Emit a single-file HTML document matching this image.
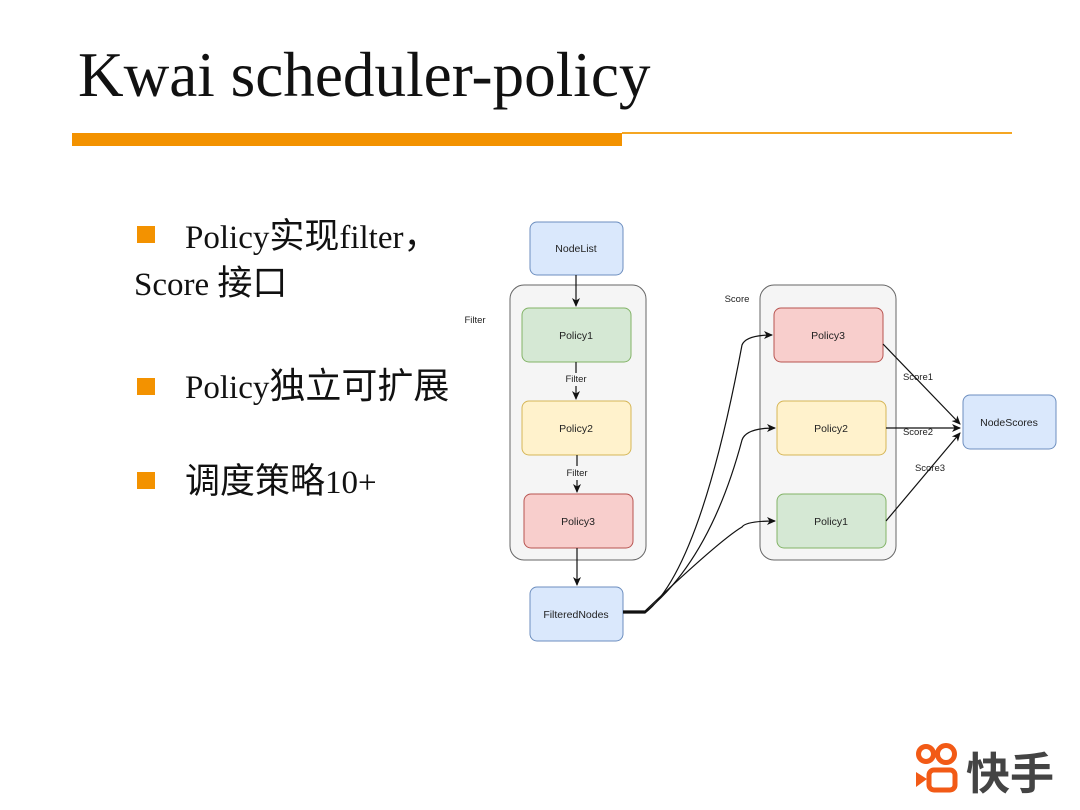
<!DOCTYPE html>
<html><head><meta charset="utf-8"><style>
html,body{margin:0;padding:0;background:#fff;}
svg{display:block;}
</style></head><body>
<svg width="1080" height="810" viewBox="0 0 1080 810" xmlns="http://www.w3.org/2000/svg">
<defs>
<marker id="ar" markerWidth="10" markerHeight="10" refX="8" refY="5" orient="auto" markerUnits="userSpaceOnUse">
<path d="M0,1 L9,5 L0,9 L2.5,5 Z" fill="#111"/>
</marker>
</defs>
<text x="78" y="96" font-family="Liberation Serif, serif" font-size="63.2" fill="#111">Kwai scheduler-policy</text>
<rect x="72" y="133" width="550" height="13" fill="#f39200"/>
<rect x="622" y="132" width="390" height="2" fill="#f5a623"/>

<g font-family="Liberation Serif, 'Noto Sans CJK SC', serif" font-size="33" fill="#111">
<rect x="137" y="226" width="18" height="17" fill="#f39200"/>
<text x="185" y="248">Policy<tspan font-size="35">实现</tspan>filter<tspan font-size="35">，</tspan></text>
<text x="134" y="295">Score <tspan font-size="35">接口</tspan></text>
<rect x="137" y="378" width="18" height="17" fill="#f39200"/>
<text x="185" y="398">Policy<tspan font-size="36">独立可扩展</tspan></text>
<rect x="137" y="472" width="18" height="17" fill="#f39200"/>
<text x="185" y="493"><tspan font-size="35">调度策略</tspan>10+</text>
</g>

<g font-family="Liberation Sans, sans-serif" font-size="10.5" fill="#222" text-anchor="middle">
<rect x="510" y="285" width="136" height="275" rx="14" fill="#f5f5f5" stroke="#666" stroke-width="1"/>
<rect x="760" y="285" width="136" height="275" rx="14" fill="#f5f5f5" stroke="#666" stroke-width="1"/>

<rect x="530" y="222" width="93" height="53" rx="7" fill="#dae8fc" stroke="#6c8ebf"/>
<text x="576" y="252">NodeList</text>
<rect x="522" y="308" width="109" height="54" rx="7" fill="#d5e8d4" stroke="#82b366"/>
<text x="576" y="339">Policy1</text>
<rect x="522" y="401" width="109" height="54" rx="7" fill="#fff2cc" stroke="#d6b656"/>
<text x="576" y="432">Policy2</text>
<rect x="524" y="494" width="109" height="54" rx="7" fill="#f8cecc" stroke="#b85450"/>
<text x="578" y="525">Policy3</text>
<rect x="530" y="587" width="93" height="54" rx="7" fill="#dae8fc" stroke="#6c8ebf"/>
<text x="576" y="618">FilteredNodes</text>

<rect x="774" y="308" width="109" height="54" rx="7" fill="#f8cecc" stroke="#b85450"/>
<text x="828" y="339">Policy3</text>
<rect x="777" y="401" width="109" height="54" rx="7" fill="#fff2cc" stroke="#d6b656"/>
<text x="831" y="432">Policy2</text>
<rect x="777" y="494" width="109" height="54" rx="7" fill="#d5e8d4" stroke="#82b366"/>
<text x="831" y="525">Policy1</text>
<rect x="963" y="395" width="93" height="54" rx="7" fill="#dae8fc" stroke="#6c8ebf"/>
<text x="1009" y="426">NodeScores</text>

<text x="475" y="323" font-size="9.5">Filter</text>
<text x="737" y="302" font-size="9.5">Score</text>
<text x="576" y="382" font-size="9.5">Filter</text>
<text x="577" y="476" font-size="9.5">Filter</text>
<text x="918" y="380" font-size="9.5">Score1</text>
<text x="918" y="435" font-size="9.5">Score2</text>
<text x="930" y="471" font-size="9.5">Score3</text>
</g>

<g stroke="#111" stroke-width="1.2" fill="none">
<line x1="576" y1="275" x2="576" y2="306" marker-end="url(#ar)"/>
<line x1="576" y1="362" x2="576" y2="373"/>
<line x1="576" y1="386" x2="576" y2="399" marker-end="url(#ar)"/>
<line x1="577" y1="455" x2="577" y2="466"/>
<line x1="577" y1="480" x2="577" y2="492" marker-end="url(#ar)"/>
<line x1="577" y1="548" x2="577" y2="585" marker-end="url(#ar)"/>
<path d="M623,613 L645,613 Q700,570 742,345 Q746,335 772,335" marker-end="url(#ar)"/>
<path d="M623,612 L645,612 Q710,560 742,440 Q746,428 775,428" marker-end="url(#ar)"/>
<path d="M623,611 L645,611 Q720,540 742,527 Q746,521 775,521" marker-end="url(#ar)"/>
<path d="M883,344 L960,424" marker-end="url(#ar)"/>
<path d="M886,428 L960,428" marker-end="url(#ar)"/>
<path d="M886,521 L960,433" marker-end="url(#ar)"/>
</g>

<g fill="none" stroke="#f25a16" stroke-width="5">
<circle cx="926" cy="754" r="7.5"/>
<circle cx="946" cy="754" r="8.5"/>
<rect x="929" y="770" width="26" height="20" rx="5"/>
</g>
<path d="M916,772 L927,779 L916,787 Z" fill="#f25a16"/>
<text x="966" y="789" font-family="'Noto Sans CJK SC', sans-serif" font-size="44" font-weight="bold" fill="#444">快手</text>
</svg>
</body></html>
